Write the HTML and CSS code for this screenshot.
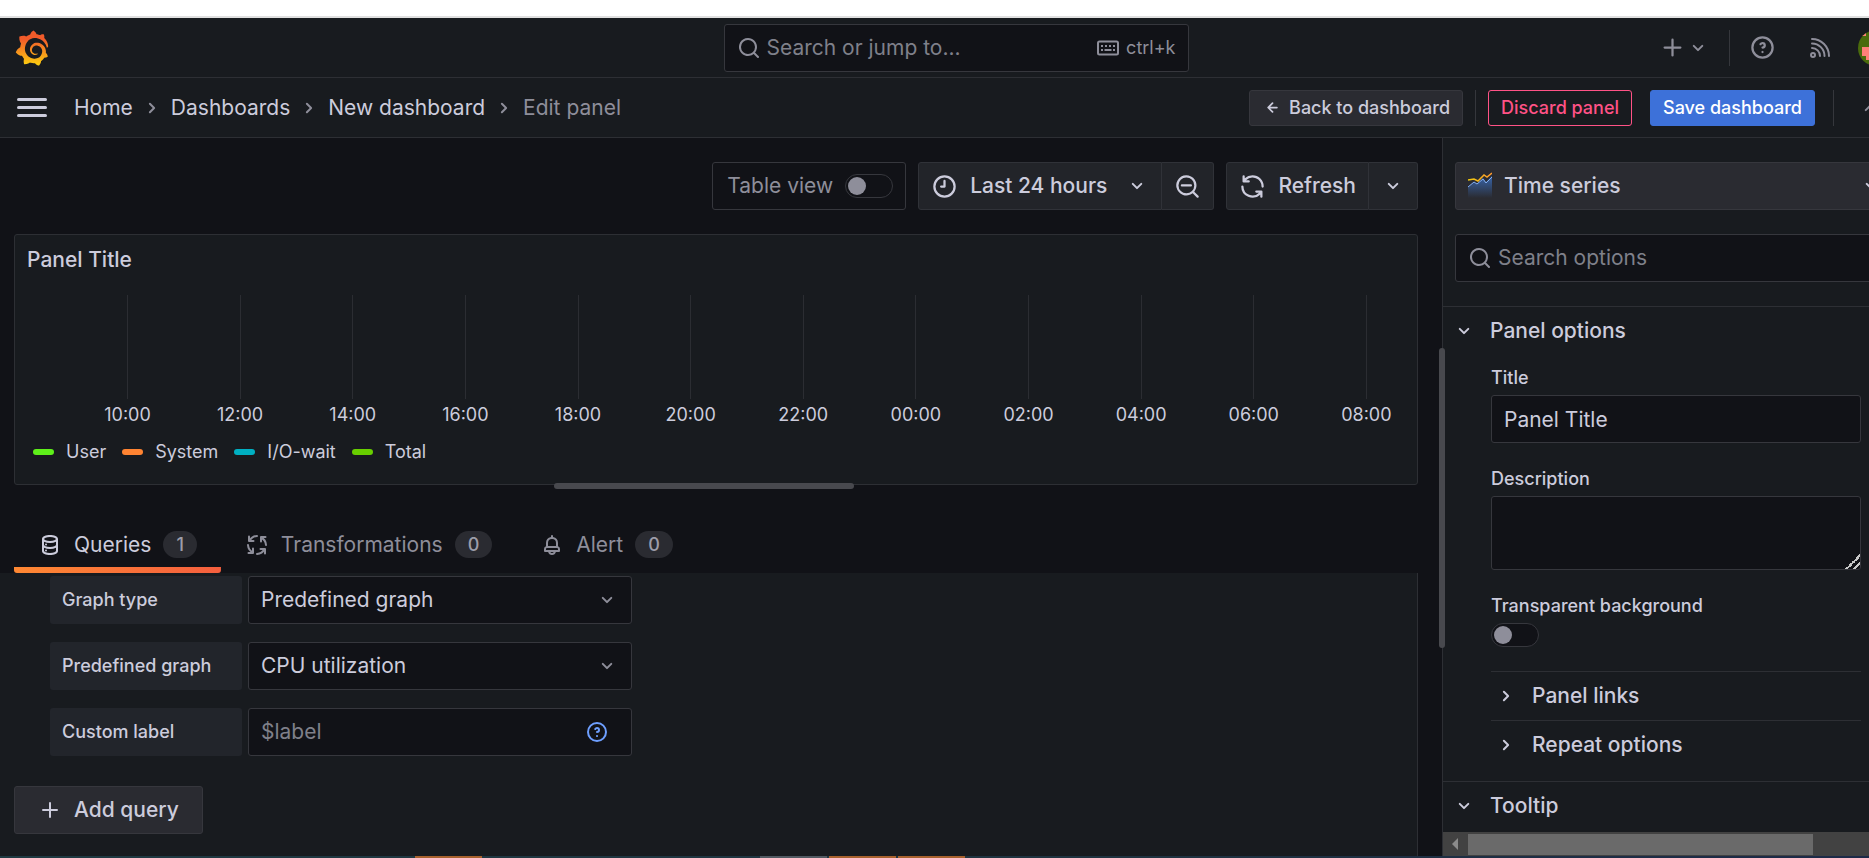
FILE: index.html
```
<!DOCTYPE html>
<html lang="en">
<head>
  <meta charset="UTF-8">
  <title>Edit panel - New dashboard - Dashboards - Grafana</title>
  <meta name="viewport" content="width=device-width, initial-scale=1.0">
  <link rel="stylesheet" href="styles.css">
</head>
<body>

<!-- Icon set -->
<svg class="icon-defs" aria-hidden="true">
  <symbol id="i-search" viewBox="0 0 24 24"><path d="M21.71,20.29,18,16.61A9,9,0,1,0,16.61,18l3.68,3.68a1,1,0,0,0,1.42,0A1,1,0,0,0,21.71,20.29ZM11,18a7,7,0,1,1,7-7A7,7,0,0,1,11,18Z"/></symbol>
  <symbol id="i-zoom-out" viewBox="0 0 24 24"><path d="M21.71,20.29,18,16.61A9,9,0,1,0,16.61,18l3.68,3.68a1,1,0,0,0,1.42,0A1,1,0,0,0,21.71,20.29ZM11,18a7,7,0,1,1,7-7A7,7,0,0,1,11,18ZM15,10H7a1,1,0,0,0,0,2h8a1,1,0,0,0,0-2Z"/></symbol>
  <symbol id="i-clock" viewBox="0 0 24 24"><path d="M12,2A10,10,0,1,0,22,12,10,10,0,0,0,12,2Zm0,18a8,8,0,1,1,8-8A8,8,0,0,1,12,20ZM12,6a1,1,0,0,0-1,1v4H9a1,1,0,0,0,0,2h3a1,1,0,0,0,1-1V7A1,1,0,0,0,12,6Z"/></symbol>
  <symbol id="i-help" viewBox="0 0 24 24"><path d="M11.29,15.29a1.58,1.58,0,0,0-.12.15.76.76,0,0,0-.09.18.64.64,0,0,0-.06.18,1.36,1.36,0,0,0,0,.2.84.84,0,0,0,.08.38.9.9,0,0,0,.54.54.94.94,0,0,0,.76,0,.9.9,0,0,0,.54-.54A1,1,0,0,0,13,16a1,1,0,0,0-.29-.71A1,1,0,0,0,11.29,15.29ZM12,2A10,10,0,1,0,22,12,10,10,0,0,0,12,2Zm0,18a8,8,0,1,1,8-8A8,8,0,0,1,12,20ZM12,7A3,3,0,0,0,9.4,8.5a1,1,0,1,0,1.73,1A1,1,0,0,1,12,9a1,1,0,0,1,0,2,1,1,0,1,0,0,2,3,3,0,0,0,0-6Z"/></symbol>
  <symbol id="i-down" viewBox="0 0 24 24"><path d="M17,9.17a1,1,0,0,0-1.41,0L12,12.71,8.46,9.17a1,1,0,0,0-1.41,0,1,1,0,0,0,0,1.42l4.24,4.24a1,1,0,0,0,1.42,0L17,10.59A1,1,0,0,0,17,9.17Z"/></symbol>
  <symbol id="i-up" viewBox="0 0 24 24"><path d="M17,13.41,12.71,9.17a1,1,0,0,0-1.42,0L7.05,13.41a1,1,0,0,0,0,1.42,1,1,0,0,0,1.41,0L12,11.29l3.54,3.54a1,1,0,0,0,1.41,0A1,1,0,0,0,17,13.41Z"/></symbol>
  <symbol id="i-right" viewBox="0 0 24 24"><path d="M14.83,11.29,10.59,7.05a1,1,0,0,0-1.42,0,1,1,0,0,0,0,1.41L12.71,12,9.17,15.54a1,1,0,0,0,0,1.41,1,1,0,0,0,.71.29,1,1,0,0,0,.71-.29l4.24-4.24A1,1,0,0,0,14.83,11.29Z"/></symbol>
  <symbol id="i-plus" viewBox="0 0 24 24"><path d="M19,11H13V5a1,1,0,0,0-2,0v6H5a1,1,0,0,0,0,2h6v6a1,1,0,0,0,2,0V13h6a1,1,0,0,0,0-2Z"/></symbol>
  <symbol id="i-sync" viewBox="0 0 24 24"><path d="M19.91,15.51H15.38a1,1,0,0,0,0,2h2.4A8,8,0,0,1,4,12a1,1,0,0,0-2,0,10,10,0,0,0,16.88,7.23V21a1,1,0,0,0,2,0V16.5A1,1,0,0,0,19.91,15.51ZM12,2A10,10,0,0,0,5.12,4.77V3a1,1,0,0,0-2,0V7.5a1,1,0,0,0,1,1h4.5a1,1,0,0,0,0-2H6.22A8,8,0,0,1,20,12a1,1,0,0,0,2,0A10,10,0,0,0,12,2Z"/></symbol>
  <symbol id="i-bell" viewBox="0 0 24 24"><path d="M18,13.18V10a6,6,0,0,0-5-5.91V3a1,1,0,0,0-2,0V4.09A6,6,0,0,0,6,10v3.18A3,3,0,0,0,4,16v2a1,1,0,0,0,1,1H8.14a4,4,0,0,0,7.72,0H19a1,1,0,0,0,1-1V16A3,3,0,0,0,18,13.18ZM8,10a4,4,0,0,1,8,0v3H8Zm4,10a2,2,0,0,1-1.72-1h3.44A2,2,0,0,1,12,20Zm6-3H6V16a1,1,0,0,1,1-1H17a1,1,0,0,1,1,1Z"/></symbol>
  <symbol id="i-left" viewBox="0 0 24 24"><path d="M17,11H9.41l3.3-3.29a1,1,0,1,0-1.42-1.42l-5,5a1,1,0,0,0-.21.33,1,1,0,0,0,0,.76,1,1,0,0,0,.21.33l5,5a1,1,0,0,0,1.42,0,1,1,0,0,0,0-1.42L9.41,13H17a1,1,0,0,0,0-2Z"/></symbol>
  <symbol id="i-rss" viewBox="0 0 24 24"><g fill="none" stroke="currentColor" stroke-width="2" stroke-linecap="round"><circle cx="5" cy="19" r="2"/><path d="M4 3a17 17 0 0 1 17 17M4 7.500a12.500 12.500 0 0 1 12.500 12.500M4 12a8 8 0 0 1 8 8"/></g></symbol>
  <symbol id="i-database" viewBox="0 0 24 24"><path d="M8,16.5a1,1,0,1,0,1,1A1,1,0,0,0,8,16.5ZM12,2C8,2,4,3.37,4,6V18c0,2.63,4,4,8,4s8-1.37,8-4V6C20,3.37,16,2,12,2Zm6,16c0,.71-2.28,2-6,2s-6-1.29-6-2V14.73A13.16,13.16,0,0,0,12,16a13.16,13.16,0,0,0,6-1.27Zm0-6c0,.71-2.28,2-6,2s-6-1.29-6-2V8.73A13.16,13.16,0,0,0,12,10a13.16,13.16,0,0,0,6-1.27ZM12,8C8.28,8,6,6.71,6,6s2.28-2,6-2,6,1.290,6,2S15.720,8,12,8ZM8,10.500a1,1,0,1,0,1,1A1,1,0,0,0,8,10.500Z"/></symbol>
  <symbol id="i-process" viewBox="0 0 24 24">
    <g fill="none" stroke="currentColor" stroke-width="2" stroke-linecap="round" stroke-linejoin="round">
      <path id="process-arrow" d="M4 3.500V8h4.500M4.500 8A9 9 0 0 1 12 3"/>
      <use href="#process-arrow" transform="rotate(90 12 12)"/>
      <use href="#process-arrow" transform="rotate(180 12 12)"/>
      <use href="#process-arrow" transform="rotate(270 12 12)"/>
    </g>
  </symbol>
  <symbol id="i-keyboard" viewBox="0 0 24 24"><rect x="2" y="5.500" width="20" height="13" rx="1.500" fill="none" stroke="currentColor" stroke-width="2"/><path d="M5 9h2v2H5zM9 9h2v2H9zM13 9h2v2h-2zM17 9h2v2h-2zM5 13h2v2H5zM8.500 13h7v2h-7zM17 13h2v2h-2z"/></symbol>
</svg>

<div class="browser-edge"></div>

<div class="app">
  <header class="top-bar">
    <a href="#" class="logo" aria-label="Grafana home">
      <svg width="34" height="36" viewBox="0 0 351 365">
        <defs>
          <linearGradient id="logo-fill" x1="0" y1="1" x2="0" y2="0">
            <stop offset="0" stop-color="#fcd00f"/>
            <stop offset="0.750" stop-color="#f15b2a"/>
          </linearGradient>
        </defs>
        <path fill="url(#logo-fill)" d="M342,161.2c-0.6-6.1-1.6-13.1-3.6-20.9c-2-7.7-5-16.2-9.4-25c-4.4-8.8-10.1-17.9-17.5-26.8c-2.9-3.5-6.1-6.9-9.5-10.2c5.1-20.3-6.2-37.9-6.2-37.9c-19.5-1.2-31.9,6.1-36.5,9.4c-0.8-0.3-1.5-0.7-2.3-1c-3.3-1.3-6.7-2.6-10.3-3.7c-3.5-1.1-7.1-2.1-10.8-3c-3.7-0.9-7.4-1.6-11.2-2.2c-0.7-0.1-1.3-0.2-2-0.3c-8.5-27.2-32.9-38.6-32.9-38.6c-27.3,17.3-32.4,41.5-32.4,41.5s-0.1,0.5-0.3,1.4c-1.5,0.4-3,0.9-4.5,1.3c-2.1,0.6-4.2,1.4-6.2,2.2c-2.1,0.8-4.1,1.6-6.2,2.5c-4.1,1.8-8.2,3.8-12.2,6c-3.9,2.2-7.7,4.6-11.4,7.1c-0.5-0.2-1-0.4-1-0.4c-37.8-14.4-71.3,2.9-71.3,2.9c-3.1,40.2,15.1,65.5,18.7,70.1c-0.9,2.5-1.7,5-2.5,7.5c-2.8,9.1-4.9,18.4-6.2,28.1c-0.2,1.4-0.4,2.8-0.5,4.2C18.8,192.7,8.5,228,8.5,228c29.1,33.5,63.1,35.6,63.1,35.6c0,0,0.1-0.1,0.1-0.1c4.3,7.7,9.3,15,14.9,21.9c2.4,2.9,4.8,5.6,7.4,8.3c-10.6,30.4,1.5,55.6,1.5,55.6c32.4,1.2,53.7-14.2,58.2-17.7c3.2,1.1,6.5,2.1,9.8,2.9c10,2.6,20.2,4.1,30.4,4.5c2.5,0.1,5.1,0.2,7.6,0.1l1.2,0l0.8,0l1.6,0l1.6-0.1l0,0.1c15.3,21.8,42.1,24.9,42.1,24.9c19.1-20.1,20.2-40.1,20.2-44.4c0-0.6,0-1.2,0-1.8c4-2.8,7.8-5.8,11.4-9.1c7.6-6.9,14.3-14.8,19.9-23.3c0.5-0.8,1-1.6,1.5-2.4c21.6,1.2,36.9-13.4,36.9-13.4c-3.6-22.5-16.4-33.5-19.1-35.6c-0.3-0.2-0.6-0.4-1-0.6c0.1-1.4,0.2-2.7,0.3-4.1c0.2-2.4,0.2-4.9,0.2-7.3l0-3.8l-0.2-3.5c0-0.7-0.1-1.3-0.2-1.9c-0.1-0.6-0.1-1.3-0.2-1.9l-0.2-1.9l-0.3-1.9c-0.4-2.5-0.8-4.9-1.4-7.4c-2.3-9.7-6.1-18.9-11-27.2c-5-8.3-11.2-15.6-18.3-21.8c-7-6.2-14.9-11.2-23.1-14.9c-8.3-3.7-16.9-6.1-25.5-7.2c-4.3-0.6-8.6-0.8-12.9-0.7l-3.2,0l-1.6,0.1c-0.6,0-1.2,0.1-1.7,0.1c-2.2,0.2-4.4,0.5-6.5,0.9c-8.6,1.6-16.7,4.7-23.8,9c-7.1,4.3-13.3,9.6-18.3,15.6c-5,6-8.9,12.7-11.6,19.6c-2.7,6.9-4.2,14.1-4.6,21c-0.1,1.7-0.1,3.5-0.1,5.2l0.1,2.7c0.1,0.8,0.1,1.7,0.2,2.5c0.3,3.5,1,6.9,1.9,10.1c1.9,6.5,4.9,12.4,8.6,17.4c3.7,5,8.2,9.1,12.9,12.4c4.7,3.2,9.8,5.5,14.8,7c5,1.5,10,2.1,14.7,2.1c1.200,0,2.400,0,3.500-0.1c0.500,0,1-0.1,1.500-0.1c0.600-0.1,1.200-0.200,1.800-0.300c1.100-0.200,2.200-0.400,3.300-0.700c1.100-0.200,2.100-0.600,3.100-0.900c2-0.7,4-1.5,5.7-2.400c1.8-0.9,3.4-2,5-3c0.4-0.3,0.9-0.6,1.3-1c1.6-1.3,1.9-3.7,0.6-5.3c-1.1-1.4-3.1-1.8-4.7-0.9c-0.4,0.2-0.8,0.4-1.2,0.6c-1.4,0.7-2.8,1.3-4.3,1.8c-1.5,0.5-3.1,0.9-4.7,1.2c-0.8,0.1-1.6,0.2-2.5,0.3c-1.700,0.1-3.700,0.1-5.2,0c-0.800-0.1-1.700-0.200-2.600-0.300c-3.7-0.5-7.4-1.6-10.9-3.2c-3.6-1.6-7-3.8-10.1-6.6c-3.1-2.8-5.8-6.1-7.9-9.9c-2.1-3.8-3.6-8-4.3-12.4c-0.3-2.2-0.5-4.5-0.4-6.7c0.1-2.400,0.400-4.700,0.800-7.100c1.700-9.6,6.500-19,13.9-26.1c1.9-1.8,3.9-3.4,6-4.9c2.1-1.5,4.4-2.8,6.8-3.9c2.4-1.1,4.8-2,7.4-2.7c2.5-0.7,5.1-1.1,7.8-1.4c1.3-0.1,2.6-0.2,4-0.2l2.700,0l1.400,0.1c2.9,0.2,5.7,0.6,8.5,1.3c5.6,1.2,11.1,3.3,16.2,6.1c10.2,5.7,18.9,14.5,24.2,25.1c2.7,5.3,4.6,11,5.5,16.9c0.2,1.5,0.4,3,0.5,4.5l0.2,2.2c0,1.400,0,2.900,0,4.300c0,0.7-0.1,1.9-0.1,2.6c-0.1,1.6-0.3,3.3-0.5,4.9c-0.2,1.6-0.5,3.2-0.8,4.8c-0.3,1.6-0.7,3.2-1.1,4.7c-0.8,3.1-1.8,6.2-3,9.3c-2.4,6-5.6,11.8-9.4,17.1c-7.7,10.6-18.2,19.2-30.2,24.7c-6,2.7-12.3,4.7-18.8,5.7c-3.2,0.6-6.5,0.9-9.8,1l-5,0c-1.8,0-3.5-0.1-5.3-0.3c-7-0.5-13.9-1.8-20.7-3.7c-6.7-1.9-13.2-4.6-19.4-7.8c-12.3-6.6-23.4-15.6-32-26.5c-4.3-5.4-8.1-11.3-11.2-17.4c-3.1-6.1-5.6-12.6-7.4-19.1c-1.8-6.6-2.9-13.3-3.4-20.1l-0.1-2.5l0-6.200c0.1-3.3,0.4-6.8,0.8-10.200c0.4-3.4,1-6.9,1.7-10.3c0.7-3.4,1.5-6.8,2.5-10.2c1.9-6.7,4.3-13.2,7.1-19.3c5.7-12.2,13.1-23.1,22-31.8c2.2-2.2,4.5-4.2,6.9-6.2c2.4-1.9,4.9-3.7,7.5-5.4c2.5-1.7,5.2-3.2,7.9-4.6c1.3-0.7,2.7-1.4,4.1-2c1.400-0.6,2.800-1.2,4.200-1.8c2.8-1.2,5.7-2.2,8.7-3.1c1.400-0.400,2.900-0.900,4.400-1.300c1.5-0.4,3-0.8,4.5-1.1c1.500-0.3,3-0.7,4.600-1c1.500-0.3,3-0.500,4.600-0.800c3-0.400,6-0.700,9.100-1c2.900-0.1,5.9-0.1,8.8,0c5.8,0.2,11.5,0.9,17,1.9c11.1,2.1,21.5,5.6,31,10.3c9.5,4.6,17.9,10.3,25.3,16.5c3.500,3,6.800,6.100,10.200,9.7c3.1,3.3,6,6.6,8.6,10c5.2,6.7,9.4,13.5,12.7,19.9c1.200,2.400,2.400,4.800,3.500,7.200c1.200,3,3.400,8.200,4.300,10.900c1.5,4.4,2.6,8.3,3.5,11.7c0.3,1.4,1.6,2.3,3,2.1c1.5-0.1,2.6-1.3,2.6-2.8C342.6,170.4,342.5,166.1,342,161.2z"/>
      </svg>
    </a>
    <div class="field top-search">
      <svg class="icon"><use href="#i-search"/></svg>
      <input type="text" placeholder="Search or jump to..." aria-label="Search or jump to">
      <span class="shortcut"><svg class="icon"><use href="#i-keyboard"/></svg>ctrl+k</span>
    </div>
    <div class="top-actions">
      <button class="icon-btn" aria-label="New"><svg class="icon icon-lg"><use href="#i-plus"/></svg><svg class="icon"><use href="#i-down"/></svg></button>
      <span class="divider"></span>
      <button class="icon-btn help-btn" aria-label="Help"><svg class="icon icon-lg"><use href="#i-help"/></svg></button>
      <button class="icon-btn" aria-label="News"><svg class="icon"><use href="#i-rss"/></svg></button>
      <button class="icon-btn avatar" aria-label="Profile">
        <svg width="36" height="36" viewBox="0 0 36 36"><rect width="36" height="36" fill="#4a6b0c"/><path d="M3 3h5v3H3zM4 17h8v8h3v5H8v-4H4z" fill="#ff8078"/></svg>
      </button>
    </div>
  </header>

  <nav class="nav-bar">
    <button class="menu-btn" aria-label="Open menu"><span></span><span></span><span></span></button>
    <ol class="breadcrumbs">
      <li><a href="#">Home</a></li>
      <li><svg class="icon"><use href="#i-right"/></svg><a href="#">Dashboards</a></li>
      <li><svg class="icon"><use href="#i-right"/></svg><a href="#">New dashboard</a></li>
      <li><svg class="icon"><use href="#i-right"/></svg><span>Edit panel</span></li>
    </ol>
    <div class="nav-actions">
      <button class="btn btn-sm"><svg class="icon icon-sm"><use href="#i-left"/></svg>Back to dashboard</button>
      <span class="divider"></span>
      <button class="btn btn-sm btn-danger">Discard panel</button>
      <button class="btn btn-sm btn-primary">Save dashboard</button>
      <span class="divider"></span>
      <button class="icon-btn" aria-label="Hide top bar"><svg class="icon"><use href="#i-up"/></svg></button>
    </div>
  </nav>

  <main class="editor">
    <div class="workspace">
      <div class="toolbar">
        <label class="table-view">Table view <input type="checkbox" class="switch"></label>
        <div class="btn-group">
          <button class="btn time-btn"><svg class="icon icon-lg"><use href="#i-clock"/></svg>Last 24 hours<svg class="icon"><use href="#i-down"/></svg></button>
          <button class="btn" aria-label="Zoom out"><svg class="icon icon-lg"><use href="#i-zoom-out"/></svg></button>
        </div>
        <div class="btn-group">
          <button class="btn"><svg class="icon icon-lg"><use href="#i-sync"/></svg>Refresh</button>
          <button class="btn" aria-label="Refresh interval"><svg class="icon"><use href="#i-down"/></svg></button>
        </div>
      </div>

      <section class="panel">
        <h2>Panel Title</h2>
        <div class="plot">
          <span class="tick">10:00</span>
          <span class="tick">12:00</span>
          <span class="tick">14:00</span>
          <span class="tick">16:00</span>
          <span class="tick">18:00</span>
          <span class="tick">20:00</span>
          <span class="tick">22:00</span>
          <span class="tick">00:00</span>
          <span class="tick">02:00</span>
          <span class="tick">04:00</span>
          <span class="tick">06:00</span>
          <span class="tick">08:00</span>
        </div>
        <ul class="legend">
          <li class="user">User</li>
          <li class="system">System</li>
          <li class="iowait">I/O-wait</li>
          <li class="total">Total</li>
        </ul>
        <div class="drag-h"></div>
      </section>

      <div class="tabs" role="tablist">
        <button class="tab active" role="tab" aria-selected="true"><svg class="icon"><use href="#i-database"/></svg>Queries<span class="count">1</span></button>
        <button class="tab" role="tab"><svg class="icon"><use href="#i-process"/></svg>Transformations<span class="count">0</span></button>
        <button class="tab" role="tab"><svg class="icon"><use href="#i-bell"/></svg>Alert<span class="count">0</span></button>
      </div>

      <section class="queries">
        <div class="query-row">
          <label for="graph-type">Graph type</label>
          <div class="field">
            <select id="graph-type"><option>Predefined graph</option></select>
            <svg class="icon"><use href="#i-down"/></svg>
          </div>
        </div>
        <div class="query-row">
          <label for="predefined-graph">Predefined graph</label>
          <div class="field">
            <select id="predefined-graph"><option>CPU utilization</option></select>
            <svg class="icon"><use href="#i-down"/></svg>
          </div>
        </div>
        <div class="query-row">
          <label for="custom-label">Custom label</label>
          <div class="field custom">
            <input type="text" id="custom-label" placeholder="$label">
            <svg class="icon info"><use href="#i-help"/></svg>
          </div>
        </div>
        <button class="btn add-query"><svg class="icon"><use href="#i-plus"/></svg>Add query</button>
      </section>
    </div>

    <aside class="options">
      <div class="drag-v"></div>
      <div class="options-head">
        <button class="btn viz-btn">
          <svg width="24" height="28" viewBox="0 0 24 28">
            <defs>
              <linearGradient id="viz-area" x1="0" y1="0" x2="0" y2="1"><stop offset="0" stop-color="#3865ab"/><stop offset="1" stop-color="#3865ab" stop-opacity="0"/></linearGradient>
              <linearGradient id="viz-line"><stop offset="0" stop-color="#f2cc0c"/><stop offset="1" stop-color="#ff9830"/></linearGradient>
            </defs>
            <path d="M0 15l6-5 3 2 6-6 3 4 6-6v22H0z" fill="url(#viz-area)"/>
            <path d="M0 15l6-5 3 2 6-5 3 4 6-6" fill="none" stroke="#84aff1" stroke-width="1"/>
            <path d="M0 8l6-1 4 2 6-6 3 2 5-4" fill="none" stroke="url(#viz-line)" stroke-width="1.500"/>
          </svg>
          <span>Time series</span>
          <svg class="icon"><use href="#i-down"/></svg>
        </button>
        <div class="field">
          <svg class="icon"><use href="#i-search"/></svg>
          <input type="text" placeholder="Search options" aria-label="Search options">
        </div>
      </div>

      <section class="group">
        <h3><svg class="icon"><use href="#i-down"/></svg>Panel options</h3>
        <div class="group-body">
          <label for="title">Title</label>
          <input type="text" id="title" class="box" value="Panel Title">
          <label for="description">Description</label>
          <textarea id="description" class="box"></textarea>
          <label for="transparent">Transparent background</label>
          <input type="checkbox" id="transparent" class="switch">
          <h4><svg class="icon"><use href="#i-right"/></svg>Panel links</h4>
          <h4><svg class="icon"><use href="#i-right"/></svg>Repeat options</h4>
        </div>
      </section>
      <section class="group tooltip-group">
        <h3><svg class="icon"><use href="#i-down"/></svg>Tooltip</h3>
      </section>

      <div class="scrollbar"><span class="arrow"></span><span class="thumb"></span></div>
    </aside>
  </main>
</div>

<footer class="taskbar"><i class="hot"></i><i class="gray"></i><i class="hot"></i><i class="hot"></i></footer>

</body>
</html>
```

FILE: styles.css
```
* {
  box-sizing: border-box;
  margin: 0;
  padding: 0;
}
body {
  display: flex;
  flex-direction: column;
  height: 100vh;
  overflow: hidden;
  background: #111217;
  color: #ccccdc;
  font-family: Inter, "Liberation Sans", sans-serif;
  font-size: 21px;
  line-height: 32px;
}
button, input, select, textarea {
  font: inherit;
  color: inherit;
  background: none;
  border: none;
  outline: none;
}
button {
  cursor: pointer;
  white-space: nowrap;
}
a {
  color: inherit;
  text-decoration: none;
}
ul, ol {
  list-style: none;
}
.icon-defs {
  display: none;
}
.icon {
  width: 24px;
  height: 24px;
  flex-shrink: 0;
  fill: currentColor;
}
.icon-sm {
  width: 21px;
  height: 21px;
}
.icon-lg {
  width: 27px;
  height: 27px;
}

.browser-edge {
  height: 18px;
  flex-shrink: 0;
  background: #fff;
  border-bottom: 2px solid #e0e0e0;
}

/* the app runs a little past the right edge of the window */
.app {
  flex: 1;
  min-height: 0;
  width: calc(100% + 43px);
  display: flex;
  flex-direction: column;
}

/* shared controls */
.btn {
  display: flex;
  align-items: center;
  gap: 12px;
  height: 48px;
  padding: 0 12px;
  font-weight: 500;
  background: #222429;
  border: 1px solid #303238;
  border-radius: 3px;
}
.btn-sm {
  height: 36px;
  gap: 6px;
  font-size: 18px;
  background: #2a2b31;
  border-color: #36373d;
}
.btn-danger {
  color: #ff5286;
  background: none;
  border-color: #ff5286;
}
.btn-primary {
  color: #fff;
  background: #3d71d9;
  border-color: #3d71d9;
}
.icon-btn {
  display: flex;
  align-items: center;
  color: #8e8e9a;
}
.divider {
  width: 1px;
  height: 36px;
  background: #35373c;
}
.field {
  display: flex;
  align-items: center;
  height: 48px;
  padding: 0 12px;
  background: #111217;
  border: 1px solid #36373d;
  border-radius: 3px;
}
.field .icon {
  color: #8e8e9a;
}
.field input, .field select {
  flex: 1;
  min-width: 0;
  appearance: none;
}
.field .icon + input {
  padding-left: 6px;
}
::placeholder {
  color: #7f808a;
  opacity: 1;
}
.switch {
  appearance: none;
  display: block;
  width: 48px;
  height: 24px;
  padding: 2px;
  background: #111217;
  border: 1px solid #36373d;
  border-radius: 12px;
}
.switch::before {
  content: "";
  display: block;
  width: 18px;
  height: 18px;
  border-radius: 50%;
  background: #8e8e9a;
}
.switch:checked::before {
  margin-left: auto;
}

/* top bar */
.top-bar {
  display: grid;
  grid-template-columns: 1fr 465px 1fr;
  align-items: center;
  height: 60px;
  flex-shrink: 0;
  padding: 0 18px;
  background: #181b1f;
  border-bottom: 1px solid #2d2f34;
}
.logo, .logo svg {
  display: block;
}
.logo {
  margin-left: -3px;
}
.shortcut {
  display: flex;
  align-items: center;
  gap: 6px;
  font-size: 18px;
  color: #8e8e9a;
}
.top-actions {
  display: flex;
  align-items: center;
  justify-content: flex-end;
}
.top-actions .divider {
  margin: 0 19px;
}
.help-btn {
  margin-right: 32px;
}
.avatar {
  margin-left: 26px;
  border-radius: 50%;
  overflow: hidden;
}

/* breadcrumbs row */
.nav-bar {
  display: flex;
  align-items: center;
  height: 60px;
  flex-shrink: 0;
  padding: 0 18px 0 17px;
  background: #181b1f;
  border-bottom: 1px solid #2d2f34;
}
.menu-btn {
  display: flex;
  flex-direction: column;
  gap: 5px;
  width: 30px;
}
.menu-btn span {
  height: 3px;
  border-radius: 2px;
  background: #ccccdc;
}
.breadcrumbs {
  display: flex;
  margin-left: 27px;
}
.breadcrumbs li {
  display: flex;
  align-items: center;
}
.breadcrumbs .icon {
  margin: 0 7px;
  color: #8e8e9a;
}
.breadcrumbs span {
  color: #8e8e9a;
}
.nav-actions {
  display: flex;
  align-items: center;
  gap: 12px;
  margin-left: auto;
}
.btn-danger, .btn-primary {
  margin-right: 6px;
}
.nav-actions .icon-btn {
  margin: 0 12px;
}

.editor {
  flex: 1;
  min-height: 0;
  display: grid;
  grid-template-columns: 1fr 470px;
}

/* left side */
.workspace {
  display: flex;
  flex-direction: column;
  min-width: 0;
  padding: 24px 24px 0 0;
}
.toolbar {
  display: flex;
  justify-content: flex-end;
  gap: 12px;
  margin-bottom: 24px;
}
.table-view {
  display: flex;
  align-items: center;
  gap: 12px;
  height: 48px;
  padding: 0 12px 0 14px;
  color: #8e8e9a;
  background: #111217;
  border: 1px solid #36373d;
  border-radius: 3px;
}
.btn-group {
  display: flex;
}
.btn-group .btn:first-child {
  border-radius: 3px 0 0 3px;
}
.btn-group .btn:last-child {
  border-left: none;
  border-radius: 0 3px 3px 0;
}
.time-btn .icon:last-child {
  margin-left: 6px;
}
.panel {
  position: relative;
  margin-left: 14px;
  height: 251px;
  flex-shrink: 0;
  background: #181b1f;
  border: 1px solid #2d2f34;
  border-radius: 3px;
}
.panel h2 {
  padding: 9px 12px 7px;
  font-size: 21px;
  font-weight: 500;
}
.plot {
  display: flex;
  justify-content: space-between;
  margin: 12px 50px 0 112px;
}
.tick {
  display: flex;
  flex-direction: column;
  align-items: center;
  width: 1px;
  font-size: 18px;
  white-space: nowrap;
}
.tick::before {
  content: "";
  width: 1px;
  height: 104px;
  background: #2b2d32;
}
.legend {
  display: flex;
  gap: 16px;
  padding: 5px 18px;
  font-size: 18px;
}
.legend li {
  display: flex;
  align-items: center;
  gap: 12px;
}
.legend li::before {
  content: "";
  width: 21px;
  height: 6px;
  border-radius: 3px;
  background: #5ef01a;
}
.legend .system::before {
  background: #ff8432;
}
.legend .iowait::before {
  background: #00b0c2;
}
.legend .total::before {
  background: #68cf00;
}
.drag-h {
  position: absolute;
  bottom: -5px;
  left: calc(50% - 162px);
  width: 300px;
  height: 6px;
  border-radius: 3px;
  background: #48494e;
}

.tabs {
  display: flex;
  margin: 33px 0 0 14px;
}
.tab {
  display: flex;
  align-items: center;
  gap: 12px;
  height: 55px;
  padding: 0 24px 2px;
  color: #8e8e9a;
}
.tab.active {
  color: #ccccdc;
  background: linear-gradient(to right, #ff8833, #f55f3e) bottom / 100% 6px no-repeat;
  border-radius: 3px;
}
.count {
  padding: 0 13px;
  font-size: 18px;
  font-weight: 500;
  line-height: 27px;
  color: #9d9da9;
  background: #2a2b31;
  border-radius: 14px;
}

.queries {
  flex: 1;
  display: flex;
  flex-direction: column;
  gap: 18px;
  padding: 3px 0 0 14px;
  background: #181b1f;
  border-right: 1px solid #2d2f34;
}
.query-row {
  display: flex;
  gap: 6px;
  padding-left: 36px;
}
.query-row label {
  width: 192px;
  height: 48px;
  padding: 0 12px;
  font-size: 18px;
  font-weight: 500;
  line-height: 48px;
  background: #22252b;
  border-radius: 3px;
}
.query-row .field {
  width: 384px;
}
.query-row .custom {
  padding-right: 22px;
}
.query-row .info {
  color: #6e9fff;
}
.add-query {
  align-self: flex-start;
  margin-top: 12px;
  padding: 0 23px;
  background: #2a2b31;
  border-color: #36373d;
}

/* right side */
.options {
  position: relative;
  display: flex;
  flex-direction: column;
  min-height: 0;
  background: #181b1f;
  border-left: 1px solid #2d2f34;
}
.drag-v {
  position: absolute;
  left: -4px;
  top: 210px;
  width: 6px;
  height: 300px;
  border-radius: 3px;
  background: #48494e;
}
.options-head {
  display: flex;
  flex-direction: column;
  gap: 24px;
  padding: 24px 12px;
}
.viz-btn {
  background: #2a2b31;
  border-color: #36373d;
}
.viz-btn .icon {
  margin-left: auto;
  margin-right: 4px;
}
.group {
  border-top: 1px solid #2d2f34;
}
h3, h4 {
  display: flex;
  align-items: center;
  gap: 14px;
  height: 48px;
  font-size: 21px;
  font-weight: 500;
}
h3 {
  padding-left: 9px;
}
.group-body {
  display: flex;
  flex-direction: column;
  padding: 11px 51px 12px 48px;
}
.group-body label {
  font-size: 18px;
  font-weight: 500;
  line-height: 24px;
  margin-bottom: 5px;
}
.box {
  height: 48px;
  padding: 0 12px;
  margin-bottom: 24px;
  background: #111217;
  border: 1px solid #36373d;
  border-radius: 3px;
}
textarea.box {
  height: 74px;
}
textarea::-webkit-resizer {
  background: linear-gradient(135deg, transparent 50%, #c8c8c8 50%, #c8c8c8 60%, transparent 60%, transparent 76%, #c8c8c8 76%, #c8c8c8 86%, transparent 86%);
}
.group-body .switch {
  margin-bottom: 24px;
}
h4 {
  height: 49px;
  padding-left: 3px;
  border-top: 1px solid #2d2f34;
}
.tooltip-group {
  flex: 1;
}
.scrollbar {
  display: flex;
  align-items: center;
  height: 24px;
  flex-shrink: 0;
  background: #424242;
}
.scrollbar .arrow {
  margin: 0 10px 0 9px;
  border: 6px solid transparent;
  border-left: none;
  border-right-color: #8b8b8b;
}
.scrollbar .thumb {
  width: 345px;
  height: 21px;
  background: #6a6a6a;
}

/* strip of the desktop taskbar under the window */
.taskbar {
  display: flex;
  gap: 2px;
  height: 2px;
  flex-shrink: 0;
  padding-left: 415px;
  background: linear-gradient(to right, #1f3a42, #1f3340 60%, #1d2a48);
}
.taskbar i {
  width: 67px;
  background: #a8622e;
}
.taskbar .gray {
  margin-left: 276px;
  background: #515a62;
}
```
